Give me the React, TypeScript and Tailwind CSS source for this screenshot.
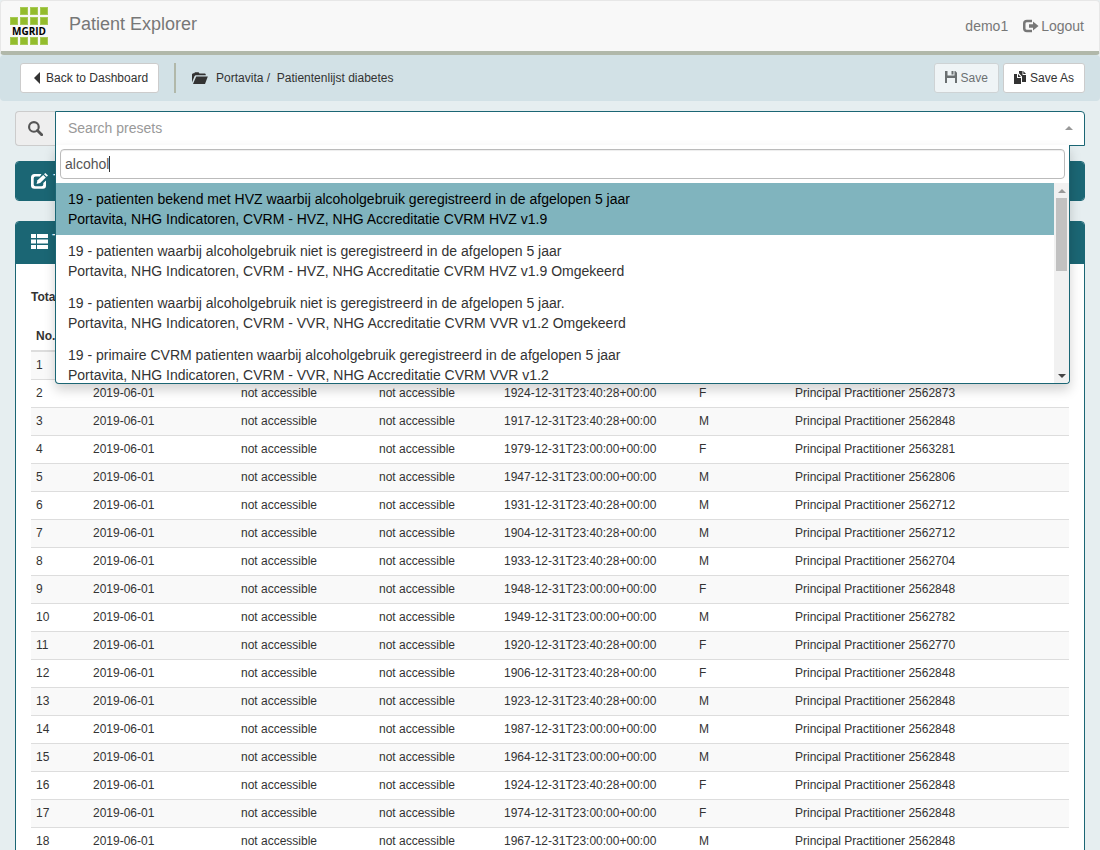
import React, { useState } from 'react';

interface Preset {
  title: string;
  path: string;
}

interface Patient {
  no: number;
  date?: string;
  birth?: string;
  sex?: string;
  practitioner?: number;
}

const presets: Preset[] = [
  {
    title: '19 - patienten bekend met HVZ waarbij alcoholgebruik geregistreerd in de afgelopen 5 jaar',
    path: 'Portavita, NHG Indicatoren, CVRM - HVZ, NHG Accreditatie CVRM HVZ v1.9',
  },
  {
    title: '19 - patienten waarbij alcoholgebruik niet is geregistreerd in de afgelopen 5 jaar',
    path: 'Portavita, NHG Indicatoren, CVRM - HVZ, NHG Accreditatie CVRM HVZ v1.9 Omgekeerd',
  },
  {
    title: '19 - patienten waarbij alcoholgebruik niet is geregistreerd in de afgelopen 5 jaar.',
    path: 'Portavita, NHG Indicatoren, CVRM - VVR, NHG Accreditatie CVRM VVR v1.2 Omgekeerd',
  },
  {
    title: '19 - primaire CVRM patienten waarbij alcoholgebruik geregistreerd in de afgelopen 5 jaar',
    path: 'Portavita, NHG Indicatoren, CVRM - VVR, NHG Accreditatie CVRM VVR v1.2',
  },
];

const patients: Patient[] = [
  { no: 1 },
  { no: 2, date: '2019-06-01', birth: '1924-12-31T23:40:28+00:00', sex: 'F', practitioner: 2562873 },
  { no: 3, date: '2019-06-01', birth: '1917-12-31T23:40:28+00:00', sex: 'M', practitioner: 2562848 },
  { no: 4, date: '2019-06-01', birth: '1979-12-31T23:00:00+00:00', sex: 'F', practitioner: 2563281 },
  { no: 5, date: '2019-06-01', birth: '1947-12-31T23:00:00+00:00', sex: 'M', practitioner: 2562806 },
  { no: 6, date: '2019-06-01', birth: '1931-12-31T23:40:28+00:00', sex: 'M', practitioner: 2562712 },
  { no: 7, date: '2019-06-01', birth: '1904-12-31T23:40:28+00:00', sex: 'M', practitioner: 2562712 },
  { no: 8, date: '2019-06-01', birth: '1933-12-31T23:40:28+00:00', sex: 'M', practitioner: 2562704 },
  { no: 9, date: '2019-06-01', birth: '1948-12-31T23:00:00+00:00', sex: 'F', practitioner: 2562848 },
  { no: 10, date: '2019-06-01', birth: '1949-12-31T23:00:00+00:00', sex: 'M', practitioner: 2562782 },
  { no: 11, date: '2019-06-01', birth: '1920-12-31T23:40:28+00:00', sex: 'F', practitioner: 2562770 },
  { no: 12, date: '2019-06-01', birth: '1906-12-31T23:40:28+00:00', sex: 'F', practitioner: 2562848 },
  { no: 13, date: '2019-06-01', birth: '1923-12-31T23:40:28+00:00', sex: 'M', practitioner: 2562848 },
  { no: 14, date: '2019-06-01', birth: '1987-12-31T23:00:00+00:00', sex: 'M', practitioner: 2562848 },
  { no: 15, date: '2019-06-01', birth: '1964-12-31T23:00:00+00:00', sex: 'M', practitioner: 2562848 },
  { no: 16, date: '2019-06-01', birth: '1924-12-31T23:40:28+00:00', sex: 'F', practitioner: 2562848 },
  { no: 17, date: '2019-06-01', birth: '1974-12-31T23:00:00+00:00', sex: 'F', practitioner: 2562848 },
  { no: 18, date: '2019-06-01', birth: '1967-12-31T23:00:00+00:00', sex: 'M', practitioner: 2562848 },
];

const Logo = () => (
  <svg width="38" height="38" viewBox="0 0 38 38" aria-label="MGRID">
    {[
      [10, 0], [20, 0], [30, 0],
      [0, 10], [10, 10], [20, 10], [30, 10],
      [0, 30], [10, 30], [20, 30], [30, 30],
    ].map(([x, y]) => (
      <rect key={`${x}-${y}`} x={x + 0.5} y={y + 0.5} width="7" height="7" fill="#93bc2c" stroke="#a6c955" />
    ))}
    <rect y="19" width="38" height="10" fill="#f8f8f8" />
    <text x="19" y="28" textAnchor="middle" fontFamily="Open Sans, sans-serif" fontWeight="700" fontSize="10" fill="#000">
      MGRID
    </text>
  </svg>
);

const CaretLeftIcon = () => (
  <svg width="9" height="12" viewBox="0 0 9 12" fill="currentColor">
    <path d="M9 0v12L3 6z" />
  </svg>
);

const FolderIcon = () => (
  <svg width="16" height="12" viewBox="0 0 16 12" fill="currentColor">
    <path d="M0 10.5V2.2L1 1.2h1.200L3 .3h3.600l.9 1.200h5.600l.7 1v.8H3.600L2.600 4.100z" />
    <path d="M4.200 4.400h11.600L13 12H1z" />
  </svg>
);

const SaveIcon = () => (
  <svg className="mb-0.5" width="12" height="12" viewBox="0 0 12 12" fill="currentColor">
    <path d="M0 0h2.500v4.500h7V0h.8L12 1.700V12h-2V7H2v5H0zM6.500 0h2v3.500h-2z" />
  </svg>
);

const DuplicateIcon = () => (
  <svg className="mb-0.5" width="12" height="13" viewBox="0 0 12 13" fill="currentColor">
    <path d="M0 3h3v4h4v6H0z" />
    <path d="M4 3l3 3H4z" />
    <path d="M5 0h3.500v4H12v7H8V5.500L5 2.300z" />
    <path d="M9.300 0L12 3H9.300z" />
  </svg>
);

const LogoutIcon = () => (
  <svg width="16" height="14" viewBox="0 0 16 14" fill="currentColor">
    <path d="M9 .8v2.400H4Q2.500 3.200 2.500 4.500v5Q2.500 10.800 4 10.800h5v2.400H4Q0 13.200 0 9.500v-5Q0 .8 4 .8z" />
    <path d="M10 2.400L15.500 7 10 11.600V8.800H6V5.200h4z" />
  </svg>
);

const SearchIcon = () => (
  <svg width="15" height="15" viewBox="0 0 14 14" fill="none" stroke="currentColor">
    <circle cx="5.500" cy="5.500" r="4.500" strokeWidth="2" />
    <path d="M8.800 8.800l4 4" strokeWidth="2.600" strokeLinecap="round" />
  </svg>
);

const EditIcon = () => (
  <svg width="18" height="16" viewBox="0 0 18 16" fill="currentColor">
    <path d="M10.500 1L9 3.500H4.500Q2.700 3.500 2.700 5.500v6Q2.700 13.300 4.500 13.300h6Q12.300 13.300 12.300 11.500V10L15 7.500v5Q15 15.800 12 15.800H3.500Q0 15.800 0 12.500V4.500Q0 1 3.500 1z" />
    <path d="M5.600 11l.9-3.700L12.200 2l2.600 2.600L9.200 10z" />
    <path d="M13 1.300L14.300 0 17 2.600l-1.300 1.200z" />
  </svg>
);

const ListIcon = () => (
  <svg width="17" height="15" viewBox="0 0 17 15" fill="currentColor">
    <path d="M0 0h5v4H0zM6 0h11v4H6zM0 5.500h5v4H0zM6 5.500h11v4H6zM0 11h5v4H0zM6 11h11v4H6z" />
  </svg>
);

const CaretUp = () => (
  <svg width="8" height="4" viewBox="0 0 8 4" fill="#999">
    <path d="M4 0l4 4H0z" />
  </svg>
);

const CaretDown = () => (
  <svg width="8" height="4" viewBox="0 0 8 4" fill="#444">
    <path d="M0 0h8L4 4z" />
  </svg>
);

interface PanelProps {
  icon: React.ReactNode;
  title: string;
  children?: React.ReactNode;
}

const Panel: React.FC<PanelProps> = ({ icon, title, children }) => (
  <section className="mb-5 overflow-hidden rounded border border-[#1b6674] bg-white">
    <div className={`flex items-center gap-1 bg-[#1b6674] px-[15px] text-white ${children ? 'h-[42px] pb-1' : 'h-[38px]'}`}>
      {icon}
      <h2 className="text-base">{title}</h2>
    </div>
    {children}
  </section>
);

const PresetSearch = () => {
  const [query, setQuery] = useState('alcohol');

  return (
    <div className="relative mb-[15px] flex h-[35px]">
      <label
        htmlFor="preset-query"
        className="flex w-10 items-center justify-center rounded-l border border-r-0 border-[#ccc] bg-[#eee] text-[#555]"
      >
        <SearchIcon />
      </label>
      <button className="flex flex-1 items-center justify-between rounded-tr border border-[#1b6674] bg-white pr-[11px] pb-0.5 pl-3 text-sm text-[#999]">
        Search presets
        <CaretUp />
      </button>

      <div className="absolute top-[34px] right-[15px] left-10 z-10 rounded-b border border-t-0 border-[#1b6674] bg-white shadow-[0_6px_12px_rgba(0,0,0,0.175)]">
        <div className="relative p-1">
          <input
            id="preset-query"
            value={query}
            onChange={(e) => setQuery(e.target.value)}
            className="peer block h-[30px] w-full rounded border border-[#bbb] px-1 text-sm text-[#555] shadow-[inset_0_1px_1px_rgba(0,0,0,0.075)] outline-none"
          />
          {/* text cursor while the box has no real focus yet */}
          <span className="absolute top-[11px] left-[53px] h-4 w-px bg-[#333] peer-focus:hidden" />
        </div>
        <div className="flex h-[200px] overflow-hidden rounded-b">
          <ul className="flex-1">
            {presets.map((preset, i) => (
              <li
                key={preset.title}
                className={`px-3 py-1.5 text-sm leading-5 ${i === 0 ? 'bg-[#80b4be] text-black' : 'text-[#333]'}`}
              >
                <div>{preset.title}</div>
                <div>{preset.path}</div>
              </li>
            ))}
          </ul>
          <div className="flex w-[15px] flex-col items-center justify-between bg-[#f1f1f1]">
            <div className="flex flex-col items-center">
              <div className="flex h-[15px] items-center">
                <CaretUp />
              </div>
              <div className="h-[73px] w-[11px] bg-[#c1c1c1]" />
            </div>
            <div className="flex h-[15px] items-center">
              <CaretDown />
            </div>
          </div>
        </div>
      </div>
    </div>
  );
};

const PatientTable = () => (
  <table className="w-full table-fixed border-collapse text-left text-xs leading-[17px]">
    <thead>
      <tr className="border-b-2 border-[#ddd]">
        <th className="w-[57px] p-[5px]">No.</th>
        <th className="w-[148px] p-[5px]" aria-label="Date" />
        <th className="w-[138px] p-[5px]" aria-label="Name" />
        <th className="w-[125px] p-[5px]" aria-label="Address" />
        <th className="w-[195px] p-[5px]" aria-label="Birth date" />
        <th className="w-[96px] p-[5px]" aria-label="Gender" />
        <th className="p-[5px]" aria-label="Practitioner" />
      </tr>
    </thead>
    <tbody>
      {patients.map((patient) => (
        <tr key={patient.no} className="border-t border-[#ddd] odd:bg-[#f9f9f9]">
          <td className="p-[5px]">{patient.no}</td>
          <td className="p-[5px]">{patient.date}</td>
          <td className="p-[5px]">{patient.date && 'not accessible'}</td>
          <td className="p-[5px]">{patient.date && 'not accessible'}</td>
          <td className="p-[5px]">{patient.birth}</td>
          <td className="p-[5px]">{patient.sex}</td>
          <td className="p-[5px]">{patient.practitioner && `Principal Practitioner ${patient.practitioner}`}</td>
        </tr>
      ))}
    </tbody>
  </table>
);

export default function App() {
  return (
    <div className="h-screen overflow-hidden bg-[#e6eef0] font-['Liberation_Sans',Arial,sans-serif] text-[#333]">
      <header className="flex h-[55px] items-center justify-between rounded border border-b-4 border-[#e7e7e7] border-b-[#b1b8aa] bg-[#f8f8f8] pr-[15px] pl-[9px] text-[#777]">
        <div className="flex items-center gap-[21px]">
          <Logo />
          <h1 className="pb-1 text-lg">Patient Explorer</h1>
        </div>
        <nav className="flex items-center gap-[15px] text-sm">
          <a href="#user">demo1</a>
          <a href="#logout" className="flex items-center gap-0.5">
            <LogoutIcon />
            Logout
          </a>
        </nav>
      </header>

      <div className="flex h-[46px] items-center justify-between rounded bg-[#d2e1e6] pr-[15px] pl-5 text-xs">
        <div className="flex items-center">
          <button className="flex h-[30px] items-center gap-1.5 rounded-[3px] border border-[#ccc] bg-white px-2.5">
            <CaretLeftIcon />
            Back to Dashboard
          </button>
          <div className="ml-[15px] flex h-[30px] items-center gap-2 border-l-2 border-[#b1b8aa] pl-4">
            <FolderIcon />
            <span>Portavita /&nbsp; Patientenlijst diabetes</span>
          </div>
        </div>
        <div className="flex gap-1">
          <button disabled className="flex h-[30px] items-center gap-1 rounded-[3px] border border-[#ccc] bg-white px-2.5 opacity-65">
            <SaveIcon />
            Save
          </button>
          <button className="flex h-[30px] items-center gap-1 rounded-[3px] border border-[#ccc] bg-white px-2.5">
            <DuplicateIcon />
            Save As
          </button>
        </div>
      </div>

      <main className="px-[15px] pt-2.5">
        <PresetSearch />
        <Panel icon={<EditIcon />} title="T" />
        <Panel icon={<ListIcon />} title="T">
          <div className="px-[15px] pt-[25px]">
            <p className="mb-[17px] text-xs leading-[17px] font-bold">Total</p>
            <PatientTable />
          </div>
        </Panel>
      </main>
    </div>
  );
}
